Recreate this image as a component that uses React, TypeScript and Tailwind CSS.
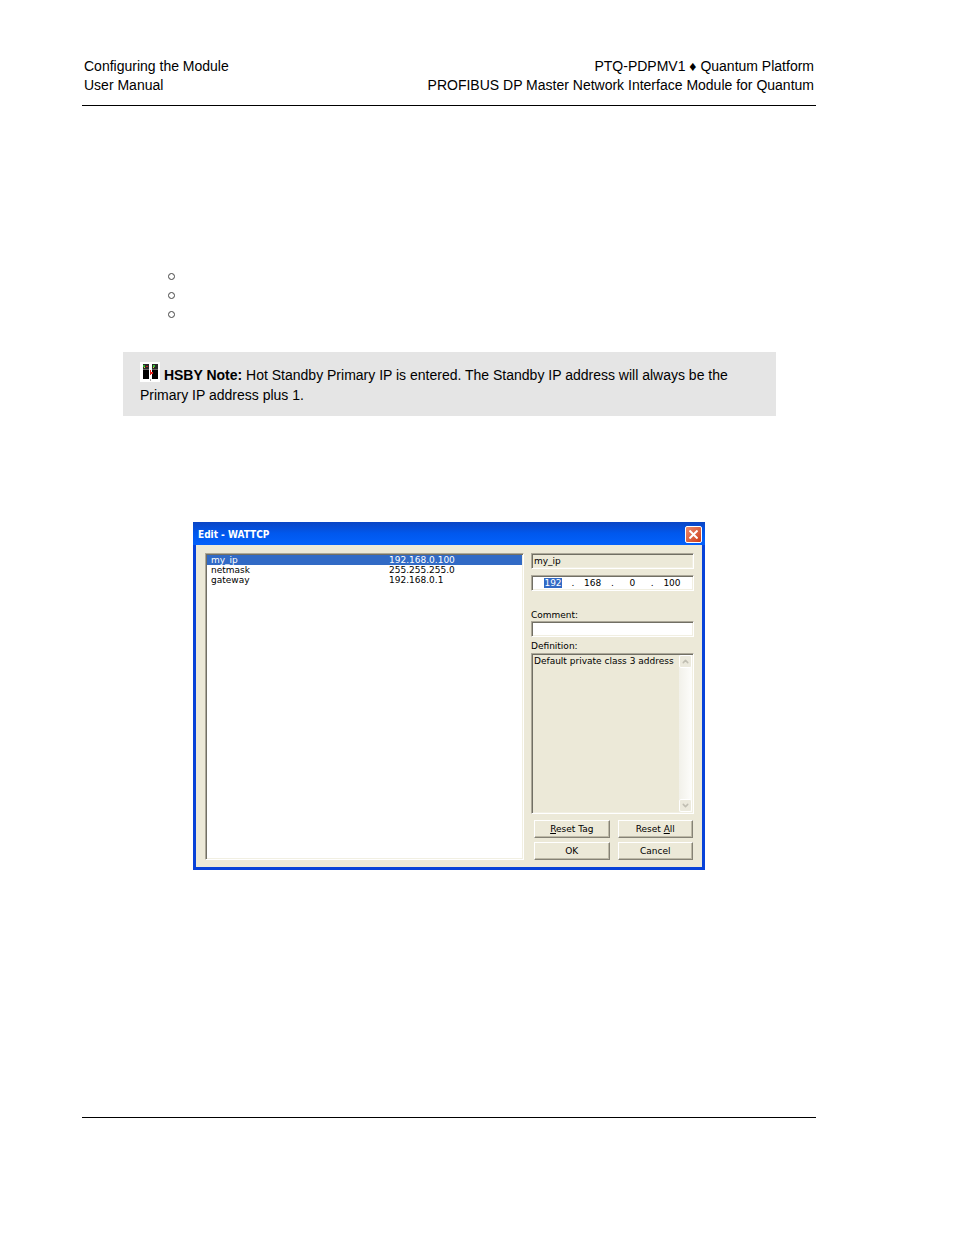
import { Fragment, type ReactNode } from "react";
import { ChevronDown, ChevronUp } from "lucide-react";

const TAGS = [
  { name: "my_ip", value: "192.168.0.100" },
  { name: "netmask", value: "255.255.255.0" },
  { name: "gateway", value: "192.168.0.1" },
];

const OCTETS = ["192", "168", "0", "100"];

const BUTTONS = [
  { before: "", hot: "R", after: "eset Tag" },
  { before: "Reset ", hot: "A", after: "ll" },
  { before: "OK", hot: "", after: "" },
  { before: "Cancel", hot: "", after: "" },
];

// Classic 2px inset edge shared by the boxes in the dialog
const SUNKEN =
  "border border-t-[#aca899] border-l-[#aca899] border-r-white border-b-white shadow-[inset_1px_1px_#716f64,inset_-1px_-1px_#f1efe2]";

function HsbyIcon() {
  return (
    <svg
      className="inline-block align-[-2px]"
      width="20"
      height="20"
      viewBox="0 0 20 20"
      shapeRendering="crispEdges"
      aria-hidden="true"
    >
      <rect width="20" height="20" fill="#fff" />
      <rect x="3" y="2" width="6" height="5" fill="#2a2a2a" />
      <rect x="12" y="2" width="6" height="5" fill="#2a2a2a" />
      <rect x="3" y="7" width="6" height="1" fill="#666" />
      <rect x="12" y="7" width="6" height="1" fill="#666" />
      <rect x="3" y="8" width="6" height="9" fill="#000" />
      <rect x="12" y="8" width="6" height="9" fill="#000" />
      <rect x="3" y="3" width="2" height="2" fill="#2fae2f" />
      <rect x="4" y="5" width="1" height="1" fill="#d8d83a" />
      <rect x="6" y="4" width="2" height="1" fill="#b22" />
      <rect x="13" y="3" width="2" height="2" fill="#3fc43f" />
      <rect x="13" y="5" width="1" height="1" fill="#d8d83a" />
      <path d="M10 8h1v2h2v2h-2v1h-1z" fill="#e3201b" />
      <rect x="10" y="17" width="1" height="2" fill="#aaa" />
    </svg>
  );
}

function ScrollButton({ label, children }: { label: string; children: ReactNode }) {
  return (
    <button
      type="button"
      aria-label={label}
      className="flex h-[13px] w-full items-center justify-center rounded-xs border border-white bg-[#ebe9dc] text-[#c0beb2]"
    >
      {children}
    </button>
  );
}

function EditDialog() {
  return (
    <section
      aria-label="Edit - WATTCP"
      className="flex h-[348px] w-[512px] flex-col border-x-3 border-b-3 border-[#0842d8] bg-[#ece9d8] font-['DejaVu_Sans',sans-serif] text-[9px] leading-[10px] text-black"
    >
      <header className="-mx-[3px] flex h-[23px] shrink-0 items-center justify-between bg-linear-to-b from-[#0a45c4] via-[#0058ee] to-[#0361fb] pt-px pr-[3px] pl-[5px]">
        <h2 className="pt-px font-['DejaVu_Sans_Condensed','DejaVu_Sans',sans-serif] text-[10px] font-bold text-white">
          Edit - WATTCP
        </h2>
        <button
          type="button"
          aria-label="Close"
          className="flex size-[17px] items-center justify-center rounded-xs border border-white bg-linear-to-br from-[#ec8a6c] to-[#cc3a12]"
        >
          <svg width="9" height="9" viewBox="0 0 9 9" stroke="#fff" strokeWidth="2" aria-hidden="true">
            <path d="M0.5 0.5l8 8M8.5 0.5l-8 8" />
          </svg>
        </button>
      </header>

      <div className="flex grow gap-[7px] pt-2 pr-2 pb-2 pl-[9px]">
        <div className={`min-w-0 flex-1 bg-white p-px ${SUNKEN}`}>
          <table className="w-full table-fixed">
            <tbody>
              {TAGS.map((t, i) => (
                <tr key={t.name} className={i === 0 ? "bg-[#316ac5] text-white" : ""}>
                  <td className="w-[182px] p-0 pl-1">{t.name}</td>
                  <td className="p-0">{t.value}</td>
                </tr>
              ))}
            </tbody>
          </table>
        </div>

        <div className="flex w-[163px] shrink-0 flex-col">
          <input
            aria-label="Tag"
            readOnly
            defaultValue="my_ip"
            className={`h-4 w-full bg-[#ece9d8] px-[2px] ${SUNKEN}`}
          />
          <div className={`mt-[6px] flex h-4 items-center justify-between bg-white px-3 ${SUNKEN}`}>
            {OCTETS.map((o, i) => (
              <Fragment key={i}>
                {i > 0 && <span>.</span>}
                <input
                  aria-label={`Octet ${i + 1}`}
                  defaultValue={o}
                  className={
                    i === 0
                      ? "h-[10px] w-[18px] bg-[#316ac5] text-center text-white"
                      : "h-[10px] w-[18px] text-center"
                  }
                />
              </Fragment>
            ))}
          </div>

          <label htmlFor="comment" className="mt-[19px]">
            Comment:
          </label>
          <input id="comment" className={`mt-px h-4 w-full bg-white px-[2px] ${SUNKEN}`} />

          <label htmlFor="definition" className="mt-1">
            Definition:
          </label>
          <div className={`mt-[2px] flex h-[161px] p-px ${SUNKEN}`}>
            <textarea
              id="definition"
              readOnly
              defaultValue="Default private class 3 address"
              className="block min-w-0 grow resize-none overflow-hidden pt-px pl-px whitespace-nowrap"
            />
            <div className="flex w-[13px] shrink-0 flex-col justify-between bg-linear-to-r from-[#f2f1ea] to-[#fdfdfb]">
              <ScrollButton label="Scroll up">
                <ChevronUp size={9} strokeWidth={4} />
              </ScrollButton>
              <ScrollButton label="Scroll down">
                <ChevronDown size={9} strokeWidth={4} />
              </ScrollButton>
            </div>
          </div>

          <div className="mt-[6px] grid grid-cols-2 gap-x-2 gap-y-1 pr-px pl-[3px]">
            {BUTTONS.map(b => (
              <button
                key={b.before + b.hot}
                type="button"
                className="h-[18px] border border-t-white border-r-[#858275] border-b-[#858275] border-l-white shadow-[inset_-1px_-1px_#bdb9a7]"
              >
                {b.before}
                {b.hot && <u>{b.hot}</u>}
                {b.after}
              </button>
            ))}
          </div>
        </div>
      </div>
    </section>
  );
}

export default function App() {
  return (
    <main className="mr-[138px] ml-[82px] bg-white pt-[57px] font-['Liberation_Sans',Arial,sans-serif] text-sm/[19px] text-black">
      <header className="flex justify-between border-b border-black px-[2px] pb-[10px]">
        <p>
          Configuring the Module
          <br />
          User Manual
        </p>
        <p className="text-right">
          PTQ-PDPMV1 ♦ Quantum Platform
          <br />
          PROFIBUS DP Master Network Interface Module for Quantum
        </p>
      </header>

      <ul className="mt-[161px] ml-[86px]">
        {[0, 1, 2].map(i => (
          <li key={i} className="flex h-[19px] items-center">
            <span className="size-[7px] rounded-full border border-[#444]" />
          </li>
        ))}
      </ul>

      <aside className="mt-[28px] mr-10 ml-[41px] bg-[#e5e5e5] px-[17px] pt-[10px] pb-[11px] leading-5">
        <p>
          <HsbyIcon /> <b>HSBY Note:</b> Hot Standby Primary IP is entered. The Standby IP address will always be the
          Primary IP address plus 1.
        </p>
      </aside>

      <div className="mt-[106px] ml-[111px]">
        <div className="inline-block bg-black align-top">
          <EditDialog />
        </div>
      </div>

      <footer className="mt-[247px] border-t border-black" />
    </main>
  );
}
